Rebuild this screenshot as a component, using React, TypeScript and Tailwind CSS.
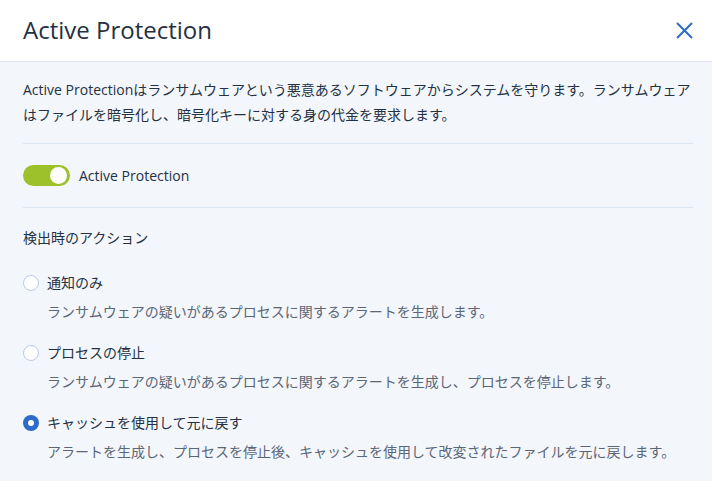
import React, { useState } from "react";

const font = { fontFamily: '"Open Sans", "Noto Sans CJK JP", sans-serif' };

const options = [
  {
    label: "通知のみ",
    desc: "ランサムウェアの疑いがあるプロセスに関するアラートを生成します。",
  },
  {
    label: "プロセスの停止",
    desc: "ランサムウェアの疑いがあるプロセスに関するアラートを生成し、プロセスを停止します。",
  },
  {
    label: "キャッシュを使用して元に戻す",
    desc: "アラートを生成し、プロセスを停止後、キャッシュを使用して改変されたファイルを元に戻します。",
  },
];

export default function App() {
  const [on, setOn] = useState(true);
  const [selected, setSelected] = useState(2);

  return (
    <div className="w-[712px] h-[481px] overflow-hidden bg-[#f3f6fb] text-[#243143]" style={font}>
      <div className="h-[62px] bg-white border-b border-[#dce5f2] flex items-center justify-between pl-[23px] pr-[16px]">
        <h1 className="text-[24px] leading-none text-[#243143] pb-[2px]">Active Protection</h1>
        <button className="w-[24px] h-[24px] flex items-center justify-center text-[#2c6bc9]">
          <svg width="17" height="17" viewBox="0 0 17 17" fill="none" stroke="currentColor" strokeWidth="2">
            <path d="M1 1L16 16M16 1L1 16" />
          </svg>
        </button>
      </div>

      <div className="px-[23px] pr-[19px]">
        <p className="text-[14px] leading-[25px] pt-[15px] pb-[16px] border-b border-[#dce5f2]">
          Active Protectionはランサムウェアという悪意あるソフトウェアからシステムを守ります。ランサムウェアはファイルを暗号化し、暗号化キーに対する身の代金を要求します。
        </p>

        <div className="flex items-center gap-[9px] h-[64px] border-b border-[#dce5f2]">
          <button
            onClick={() => setOn(!on)}
            className={`w-[47px] h-[21px] rounded-full flex items-center px-[3px] ${on ? "bg-[#9dc12a] justify-end" : "bg-[#c2ccd9] justify-start"}`}
          >
            <span className="w-[17px] h-[17px] rounded-full bg-white" />
          </button>
          <span className="text-[14px]">Active Protection</span>
        </div>

        <div className="text-[14px] pt-[19px]">検出時のアクション</div>

        <div className="flex flex-col pt-[25px] gap-[21px]">
          {options.map((o, i) => (
            <div key={o.label} className="flex flex-col gap-[9px]">
              <label className="flex items-center gap-[8px] cursor-pointer" onClick={() => setSelected(i)}>
                {selected === i ? (
                  <span className="w-[16px] h-[16px] rounded-full bg-[#2c6bc9] flex items-center justify-center">
                    <span className="w-[6px] h-[6px] rounded-full bg-white" />
                  </span>
                ) : (
                  <span className="w-[16px] h-[16px] rounded-full bg-white border border-[#b9cbe6]" />
                )}
                <span className="text-[14px] leading-[20px]">{o.label}</span>
              </label>
              <div className="pl-[24px] text-[14px] leading-[20px] text-[#5b6676]">{o.desc}</div>
            </div>
          ))}
        </div>
      </div>
    </div>
  );
}
